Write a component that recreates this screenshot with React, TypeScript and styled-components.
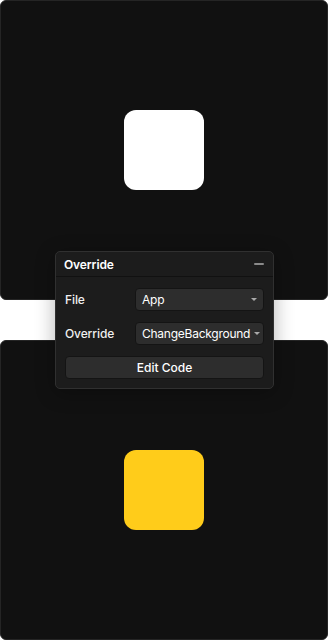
import React from "react";
import styled, { createGlobalStyle } from "styled-components";

const Global = createGlobalStyle`
  html, body { margin: 0; padding: 0; background: #ffffff; }
  body { font-family: Inter, "Noto Sans", "Liberation Sans", sans-serif; -webkit-font-smoothing: antialiased; }
  * { box-sizing: border-box; }
`;

const Stage = styled.div`
  position: relative;
  width: 328px;
  height: 640px;
  display: flex;
  flex-direction: column;
  gap: 40px;
`;

const Frame = styled.div`
  flex: 1;
  background: #111111;
  border: 1px solid #252525;
  border-radius: 6px;
  display: flex;
  align-items: center;
  justify-content: center;
`;

const Swatch = styled.div<{ $color: string }>`
  width: 80px;
  height: 80px;
  border-radius: 12px;
  background: ${(p) => p.$color};
`;

const Panel = styled.div`
  position: absolute;
  left: 55px;
  top: 251px;
  width: 219px;
  background: #1c1c1c;
  border: 1px solid #303030;
  border-radius: 5px;
  box-shadow: 0 4px 20px rgba(0, 0, 0, 0.3);
  color: #ffffff;
  font-size: 12px;
`;

const Header = styled.div`
  height: 25px;
  display: flex;
  align-items: center;
  justify-content: space-between;
  padding: 0 8px 0 8px;
  border-bottom: 1px solid #111111;
  font-weight: 600;
  letter-spacing: -0.1px;
`;

const Minimize = styled.div`
  width: 10px;
  height: 2px;
  background: #8a8a8a;
  border-radius: 1px;
  margin-right: 1px;
`;

const Body = styled.div`
  padding: 11px 9px 9px 9px;
  display: flex;
  flex-direction: column;
  gap: 11px;
`;

const Row = styled.div`
  display: grid;
  grid-template-columns: 70px minmax(0, 1fr);
  align-items: center;
`;

const Label = styled.span`
  color: #f0f0f0;
  font-weight: 500;
  letter-spacing: -0.1px;
`;

const Select = styled.div`
  height: 23px;
  min-width: 0;
  background: #2d2d2d;
  border: 1px solid #141414;
  border-radius: 4px;
  display: flex;
  align-items: center;
  justify-content: space-between;
  gap: 4px;
  padding: 0 6px 0 6px;
  color: #ffffff;
  font-weight: 400;
  letter-spacing: -0.25px;
  white-space: nowrap;
  overflow: hidden;
`;

const Caret = styled.span`
  flex: none;
  width: 0;
  height: 0;
  border-left: 3px solid transparent;
  border-right: 3px solid transparent;
  border-top: 3px solid #aaaaaa;
`;

const Button = styled.div`
  height: 23px;
  background: #2d2d2d;
  border: 1px solid #141414;
  border-radius: 4px;
  display: flex;
  align-items: center;
  justify-content: center;
  font-weight: 500;
  color: #ffffff;
`;

export default function App() {
  return (
    <>
      <Global />
      <Stage>
        <Frame>
          <Swatch $color="#ffffff" />
        </Frame>
        <Frame>
          <Swatch $color="#ffcc1a" />
        </Frame>
        <Panel>
          <Header>
            <span>Override</span>
            <Minimize />
          </Header>
          <Body>
            <Row>
              <Label>File</Label>
              <Select>
                <span>App</span>
                <Caret />
              </Select>
            </Row>
            <Row>
              <Label>Override</Label>
              <Select>
                <span>ChangeBackground</span>
                <Caret />
              </Select>
            </Row>
            <Button>Edit Code</Button>
          </Body>
        </Panel>
      </Stage>
    </>
  );
}
